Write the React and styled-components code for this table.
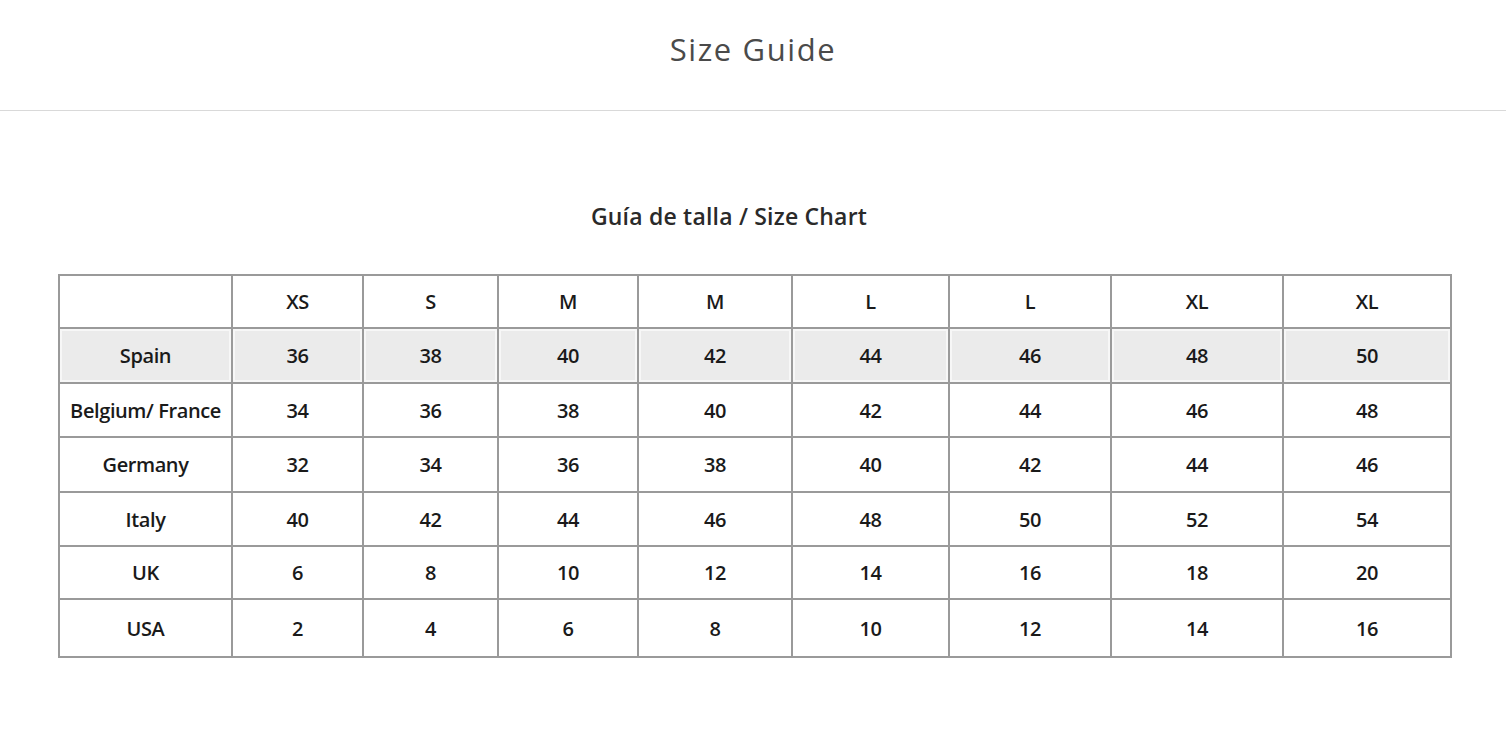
import React from 'react';
import styled, { createGlobalStyle } from 'styled-components';

const GlobalStyle = createGlobalStyle`
  body {
    margin: 0;
    background: #fff;
    font-family: "Open Sans", "Liberation Sans", sans-serif;
  }
`;

const Header = styled.header`
  height: 111px;
  box-sizing: border-box;
  border-bottom: 1px solid #d9d9d9;
  display: flex;
  justify-content: center;
  padding-top: 29px;
`;

const PageTitle = styled.h1`
  margin: 0;
  font-family: "Open Sans", sans-serif;
  font-weight: 400;
  font-size: 31px;
  line-height: 40px;
  letter-spacing: 1.6px;
  color: #4a4a4a;
`;

const Content = styled.main`
  padding: 90px 56px 0 58px;
`;

const ChartTitle = styled.h2`
  margin: 0 0 43px;
  padding-right: 50px;
  text-align: center;
  font-family: "Open Sans", sans-serif;
  font-weight: 600;
  font-size: 23px;
  line-height: 30px;
  letter-spacing: 0.2px;
  color: #2a2a2a;
  width: 1392px;
  box-sizing: border-box;
`;

const Table = styled.table`
  width: 1392px;
  border-collapse: collapse;
  table-layout: fixed;
  border: 2px solid #9a9a9a;
`;

const Row = styled.tr`
  height: ${(p) => p.$h}px;
`;

const Cell = styled.td`
  border: 2px solid #9a9a9a;
  padding: 0;
  text-align: center;
  vertical-align: middle;
  font-family: "Open Sans", sans-serif;
  font-weight: 600;
  font-size: 20px;
  letter-spacing: -0.4px;
  color: #1a1a1a;
  background: ${(p) => (p.$shaded ? '#ebebeb' : '#fff')};
  box-shadow: ${(p) => (p.$shaded ? 'inset 0 0 0 2px #f7f7f7' : 'none')};
`;

const widths = [173, 131, 135, 140, 154, 157, 162, 172, 168];
const sizes = ['', 'XS', 'S', 'M', 'M', 'L', 'L', 'XL', 'XL'];
const rows = [
  ['Spain', 36, 38, 40, 42, 44, 46, 48, 50],
  ['Belgium/ France', 34, 36, 38, 40, 42, 44, 46, 48],
  ['Germany', 32, 34, 36, 38, 40, 42, 44, 46],
  ['Italy', 40, 42, 44, 46, 48, 50, 52, 54],
  ['UK', 6, 8, 10, 12, 14, 16, 18, 20],
  ['USA', 2, 4, 6, 8, 10, 12, 14, 16],
];
const heights = [53, 55, 54, 55, 54, 53, 58];

export default function App() {
  return (
    <>
      <GlobalStyle />
      <Header>
        <PageTitle>Size Guide</PageTitle>
      </Header>
      <Content>
        <ChartTitle>Guía de talla / Size Chart</ChartTitle>
        <Table>
          <colgroup>
            {widths.map((w, i) => (
              <col key={i} style={{ width: w }} />
            ))}
          </colgroup>
          <tbody>
            <Row $h={heights[0]}>
              {sizes.map((s, i) => (
                <Cell key={i}>{s}</Cell>
              ))}
            </Row>
            {rows.map((r, ri) => (
              <Row key={ri} $h={heights[ri + 1]}>
                {r.map((v, ci) => (
                  <Cell key={ci} $shaded={ri === 0}>
                    {v}
                  </Cell>
                ))}
              </Row>
            ))}
          </tbody>
        </Table>
      </Content>
    </>
  );
}
